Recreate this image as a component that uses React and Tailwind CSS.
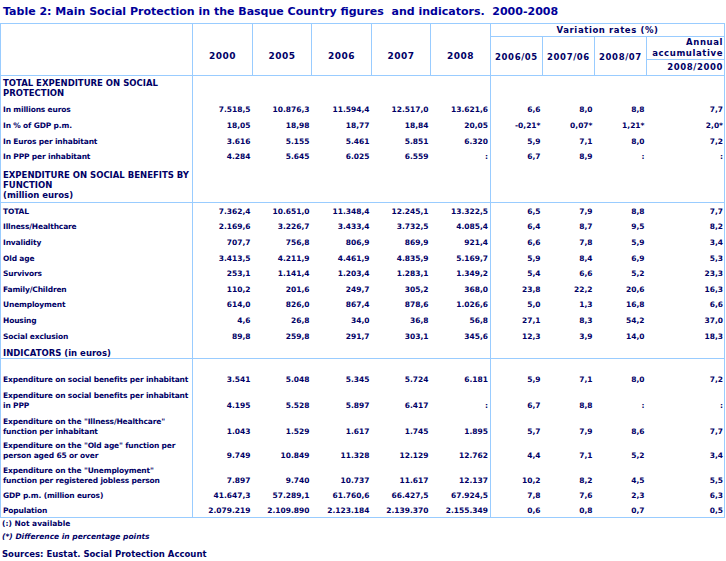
import React from "react";

const B = "border-[#99ccff]";

const sec1 = [
  ["h-[17px]", "In millions euros", "7.518,5", "10.876,3", "11.594,4", "12.517,0", "13.621,6", "6,6", "8,0", "8,8", "7,7"],
  ["h-[16px]", "In % of GDP p.m.", "18,05", "18,98", "18,77", "18,84", "20,05", "-0,21*", "0,07*", "1,21*", "2,0*"],
  ["h-[16px]", "In Euros per inhabitant", "3.616", "5.155", "5.461", "5.851", "6.320", "5,9", "7,1", "8,0", "7,2"],
  ["h-[15px]", "In PPP per inhabitant", "4.284", "5.645", "6.025", "6.559", ":", "6,7", "8,9", ":", ":"],
];

const sec2 = [
  ["h-[16px]", "TOTAL", "7.362,4", "10.651,0", "11.348,4", "12.245,1", "13.322,5", "6,5", "7,9", "8,8", "7,7"],
  ["h-[15px]", "Illness/Healthcare", "2.169,6", "3.226,7", "3.433,4", "3.732,5", "4.085,4", "6,4", "8,7", "9,5", "8,2"],
  ["h-[16px]", "Invalidity", "707,7", "756,8", "806,9", "869,9", "921,4", "6,6", "7,8", "5,9", "3,4"],
  ["h-[16px]", "Old age", "3.413,5", "4.211,9", "4.461,9", "4.835,9", "5.169,7", "5,9", "8,4", "6,9", "5,3"],
  ["h-[15px]", "Survivors", "253,1", "1.141,4", "1.203,4", "1.283,1", "1.349,2", "5,4", "6,6", "5,2", "23,3"],
  ["h-[16px]", "Family/Children", "110,2", "201,6", "249,7", "305,2", "368,0", "23,8", "22,2", "20,6", "16,3"],
  ["h-[15px]", "Unemployment", "614,0", "826,0", "867,4", "878,6", "1.026,6", "5,0", "1,3", "16,8", "6,6"],
  ["h-[16px]", "Housing", "4,6", "26,8", "34,0", "36,8", "56,8", "27,1", "8,3", "54,2", "37,0"],
  ["h-[16px]", "Social exclusion", "89,8", "259,8", "291,7", "303,1", "345,6", "12,3", "3,9", "14,0", "18,3"],
];

const sec3 = [
  ["h-[28px]", ["Expenditure on social benefits per inhabitant"], "3.541", "5.048", "5.345", "5.724", "6.181", "5,9", "7,1", "8,0", "7,2"],
  ["h-[26px]", ["Expenditure on social benefits per inhabitant", "in PPP"], "4.195", "5.528", "5.897", "6.417", ":", "6,7", "8,8", ":", ":"],
  ["h-[26px]", ["Expenditure on the \"Illness/Healthcare\"", "function per inhabitant"], "1.043", "1.529", "1.617", "1.745", "1.895", "5,7", "7,9", "8,6", "7,7"],
  ["h-[24px]", ["Expenditure on the \"Old age\" function per", "person aged 65 or over"], "9.749", "10.849", "11.328", "12.129", "12.762", "4,4", "7,1", "5,2", "3,4"],
  ["h-[25px]", ["Expenditure on the \"Unemployment\"", "function per registered jobless person"], "7.897", "9.740", "10.737", "11.617", "12.137", "10,2", "8,2", "4,5", "5,5"],
  ["h-[15px]", ["GDP p.m. (million euros)"], "41.647,3", "57.289,1", "61.760,6", "66.427,5", "67.924,5", "7,8", "7,6", "2,3", "6,3"],
  ["h-[15px]", ["Population"], "2.079.219", "2.109.890", "2.123.184", "2.139.370", "2.155.349", "0,6", "0,8", "0,7", "0,5"],
];

function DataRow({ h, label, vals, last }) {
  const bb = last ? `border-b ${B}` : "";
  const pb = last ? "pb-[1px]" : "pb-[2px]";
  return (
    <tr className={h}>
      <td className={`border-l border-r ${B} ${bb} pl-[2px] ${pb} align-bottom whitespace-nowrap tracking-[-0.15px]`}>
        {Array.isArray(label) ? label.map((l, i) => <div key={i}>{l}</div>) : label}
      </td>
      {vals.map((v, i) => (
        <td
          key={i}
          className={`${bb} ${i === 4 || i === 8 ? `border-r ${B}` : ""} text-right align-bottom ${pb} ${
            i === 8 ? "pr-[1px]" : "pr-[2px]"
          } whitespace-nowrap`}
        >
          {v}
        </td>
      ))}
    </tr>
  );
}

function HeadingRow({ h, lines, last, pb = "pb-[2px]" }) {
  const bb = last ? `border-b ${B}` : "";
  return (
    <tr className={h}>
      <td className={`border-l border-r ${B} ${bb} pl-[2px] ${pb} align-bottom text-[8.5px] leading-[10px] whitespace-nowrap`}>
        {lines.map((l, i) => (
          <div key={i}>{l}</div>
        ))}
      </td>
      <td colSpan={5} className={`border-r ${B} ${bb}`}></td>
      <td colSpan={4} className={`border-r ${B} ${bb}`}></td>
    </tr>
  );
}

export default function App() {
  const hd = `border ${B} font-bold`;
  return (
    <div className="w-[726px] h-[561px] bg-white text-[#000066] font-bold font-['DejaVu_Sans',Verdana,sans-serif]">
      <div className="h-[23px] leading-[23px] pl-[3px] text-[11px] text-[#000099] whitespace-pre">
        {"Table 2: Main Social Protection in the Basque Country figures  and indicators.  2000-2008"}
      </div>
      <table className="table-fixed border-collapse w-[724px] text-[7.5px] leading-[10px]">
        <colgroup>
          <col className="w-[192px]" />
          <col className="w-[60px]" />
          <col className="w-[59px]" />
          <col className="w-[60px]" />
          <col className="w-[59px]" />
          <col className="w-[60px]" />
          <col className="w-[52px]" />
          <col className="w-[52px]" />
          <col className="w-[52px]" />
          <col className="w-[78px]" />
        </colgroup>
        <thead className="text-[8.5px] tracking-[0.6px]">
          <tr className="h-[13px]">
            <th rowSpan={3} className={hd}></th>
            {["2000", "2005", "2006", "2007", "2008"].map((y) => (
              <th key={y} rowSpan={3} className={`${hd} align-middle pt-[12px] text-[9px] tracking-[0.5px]`}>
                {y}
              </th>
            ))}
            <th colSpan={4} className={`${hd} text-center leading-[11px]`}>
              Variation rates (%)
            </th>
          </tr>
          <tr className="h-[23px]">
            {["2006/05", "2007/06", "2008/07"].map((y) => (
              <th key={y} rowSpan={2} className={`${hd} align-middle pt-[2px]`}>
                {y}
              </th>
            ))}
            <th className={`${hd} text-right pr-[1px] leading-[11px]`}>
              <div>Annual</div>
              <div>accumulative</div>
            </th>
          </tr>
          <tr className="h-[16px]">
            <th className={`${hd} text-right pr-[1px] leading-[11px]`}>2008/2000</th>
          </tr>
        </thead>
        <tbody>
          <HeadingRow h="h-[24px]" lines={["TOTAL EXPENDITURE ON SOCIAL", "PROTECTION"]} />
          {sec1.map((r, i) => (
            <DataRow key={i} h={r[0]} label={r[1]} vals={r.slice(2)} />
          ))}
          <HeadingRow h="h-[39px]" last lines={["EXPENDITURE ON SOCIAL BENEFITS BY", "FUNCTION", "(million euros)"]} />
          {sec2.map((r, i) => (
            <DataRow key={i} h={r[0]} label={r[1]} vals={r.slice(2)} />
          ))}
          <HeadingRow h="h-[15px]" last pb="pb-0" lines={["INDICATORS (in euros)"]} />
          {sec3.map((r, i) => (
            <DataRow key={i} h={r[0]} label={r[1]} vals={r.slice(2)} last={i === sec3.length - 1} />
          ))}
        </tbody>
      </table>
      <div className="pl-[2px] text-[7.5px] leading-[12px]">(:) Not available</div>
      <div className="pl-[2px] text-[7.5px] leading-[12px] mt-px italic">(*) Difference in percentage points</div>
      <div className="pl-[2px] text-[8.5px] leading-[12px] mt-[5px]">Sources: Eustat. Social Protection Account</div>
    </div>
  );
}
